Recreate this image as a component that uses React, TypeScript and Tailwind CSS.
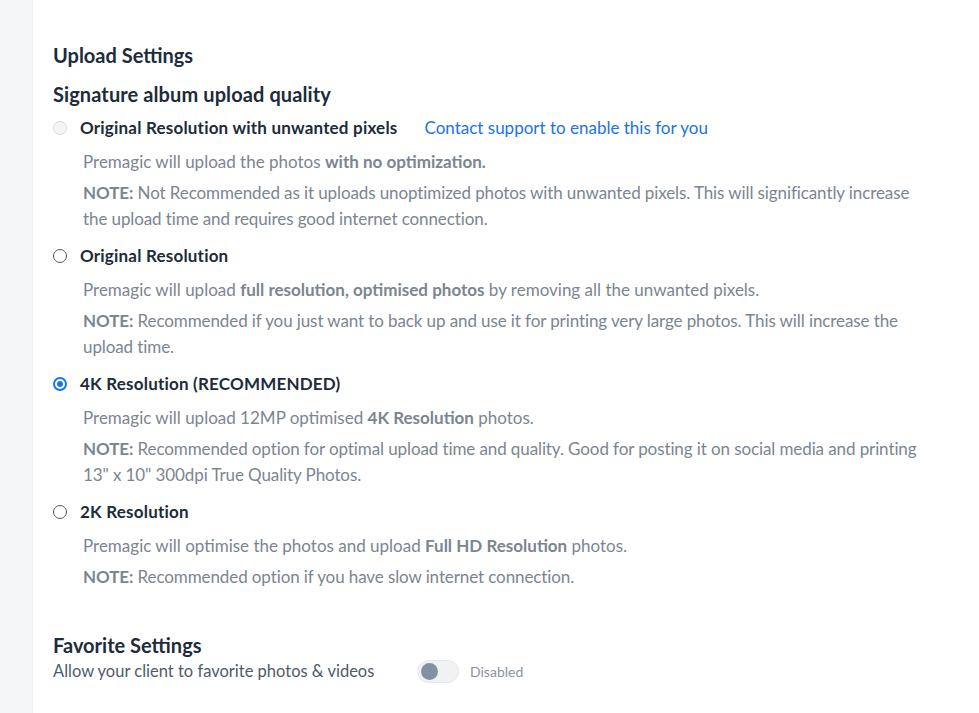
import React from "react";

const font = { fontFamily: "Lato, 'Noto Sans', sans-serif" };

function Radio({ state }: { state: "disabled" | "off" | "on" }) {
  if (state === "on")
    return (
      <span className="flex h-[14px] w-[14px] items-center justify-center rounded-full border-[2px] border-[#1677f2] bg-white">
        <span className="h-[6px] w-[6px] rounded-full bg-[#1677f2]" />
      </span>
    );
  if (state === "disabled")
    return <span className="h-[14px] w-[14px] rounded-full border border-[#d6d9dd] bg-[#f4f5f6]" />;
  return <span className="h-[14px] w-[14px] rounded-full border border-[#4b5563] bg-white" />;
}

function Option({
  state,
  label,
  extra,
  desc,
  note,
}: {
  state: "disabled" | "off" | "on";
  label: string;
  extra?: React.ReactNode;
  desc: React.ReactNode;
  note: string;
}) {
  return (
    <div className="flex flex-col">
      <div className="flex h-6 items-center">
        <Radio state={state} />
        <span className="ml-[13px] text-[17px] font-bold tracking-[0.2px] text-[#1d2b3a]">{label}</span>
        {extra}
      </div>
      <div className="mt-[9px] pl-[30px] pr-[29px] text-[17px] leading-[26px] text-[#7b8591]">
        <p>{desc}</p>
        <p className="mt-[5px] tracking-[-0.1px]">
          <span className="font-bold">NOTE:</span> {note}
        </p>
      </div>
    </div>
  );
}

export default function App() {
  return (
    <div className="flex min-h-[713px] w-full bg-white" style={font}>
      <div className="w-[33px] shrink-0 border-r border-[#eceef1] bg-[#f5f6f8]" />
      <div className="flex-1 pl-[20px] pr-[25px] pt-[41px]">
        <h2 className="text-[20px] font-bold leading-[28px] text-[#1d2b3a]">Upload Settings</h2>
        <h3 className="mt-[11px] text-[20px] font-bold leading-[28px] tracking-[0.1px] text-[#1d2b3a]">
          Signature album upload quality
        </h3>
        <div className="mt-[8px] flex flex-col gap-[12px]">
          <Option
            state="disabled"
            label="Original Resolution with unwanted pixels"
            extra={
              <a className="ml-[27px] text-[17px] text-[#1a73e8]">Contact support to enable this for you</a>
            }
            desc={
              <>
                Premagic will upload the photos <b>with no optimization.</b>
              </>
            }
            note="Not Recommended as it uploads unoptimized photos with unwanted pixels. This will significantly increase the upload time and requires good internet connection."
          />
          <Option
            state="off"
            label="Original Resolution"
            desc={
              <>
                Premagic will upload <b>full resolution, optimised photos</b> by removing all the unwanted pixels.
              </>
            }
            note="Recommended if you just want to back up and use it for printing very large photos. This will increase the upload time."
          />
          <Option
            state="on"
            label="4K Resolution (RECOMMENDED)"
            desc={
              <>
                Premagic will upload 12MP optimised <b>4K Resolution</b> photos.
              </>
            }
            note={'Recommended option for optimal upload time and quality. Good for posting it on social media and printing 13" x 10" 300dpi True Quality Photos.'}
          />
          <Option
            state="off"
            label="2K Resolution"
            desc={
              <>
                Premagic will optimise the photos and upload <b>Full HD Resolution</b> photos.
              </>
            }
            note="Recommended option if you have slow internet connection."
          />
        </div>
        <h2 className="mt-[41px] text-[20px] font-bold leading-[28px] text-[#1d2b3a]">Favorite Settings</h2>
        <div className="flex h-6 items-center">
          <span className="w-[364px] text-[16.5px] text-[#4f5b69]">Allow your client to favorite photos &amp; videos</span>
          <span className="flex h-[23px] w-[42px] items-center rounded-full border border-[#e5e7eb] bg-[#f1f2f4] px-[3px]">
            <span className="h-[17px] w-[17px] rounded-full bg-[#8391a1]" />
          </span>
          <span className="ml-[11px] text-[14px] text-[#8a939e]">Disabled</span>
        </div>
      </div>
    </div>
  );
}
